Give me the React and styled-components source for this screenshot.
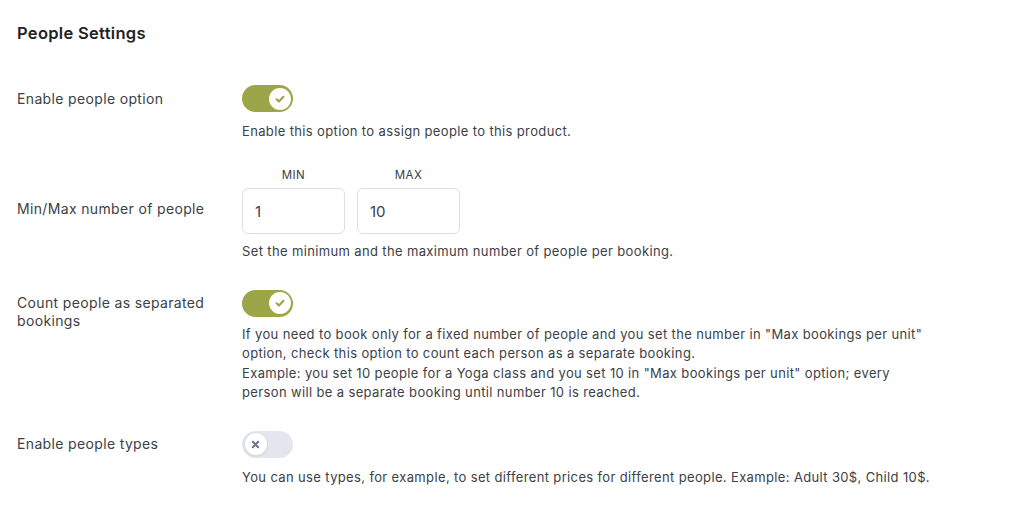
import React, { useState } from 'react';
import styled, { createGlobalStyle } from 'styled-components';

const GlobalStyle = createGlobalStyle`
    body {
        margin: 0;
        background: #fff;
        font-family: Inter, "Noto Sans", sans-serif;
        color: #3c4146;
    }
`;

const Page = styled.div`
    padding: 21px 17px;
`;

const Title = styled.h2`
    margin: 0 0 40px;
    font-size: 16.5px;
    line-height: 24px;
    font-weight: 600;
    letter-spacing: 0.3px;
    color: #1e2327;
`;

const Rows = styled.div`
    display: grid;
    row-gap: 28px;
`;

const Row = styled.div`
    display: grid;
    grid-template-columns: 200px 1fr;
    column-gap: 25px;
    align-items: start;
`;

const Label = styled.div`
    font-size: 14px;
    line-height: 18px;
    letter-spacing: 0.35px;
    padding-top: ${p => p.offset || 4.5}px;
    color: #3c4146;
`;

const Field = styled.div`
    display: flex;
    flex-direction: column;
    align-items: flex-start;
`;

const Desc = styled.p`
    margin: ${p => p.gap || 9.5}px 0 0;
    max-width: 690px;
    font-size: 13px;
    line-height: 19.5px;
    letter-spacing: 0.36px;
    color: #3c4146;
`;

const SwitchTrack = styled.button`
    width: 51px;
    height: 27px;
    border: 0;
    border-radius: 14px;
    padding: 2.5px;
    background: ${p => (p.on ? '#9ca547' : '#e3e6ec')};
    display: flex;
    justify-content: ${p => (p.on ? 'flex-end' : 'flex-start')};
    cursor: pointer;
`;

const Knob = styled.span`
    width: 22px;
    height: 22px;
    border-radius: 50%;
    background: #fff;
    box-shadow: ${p => (p.on ? 'none' : '0 0 0 1px #d8dce3, 0 1px 2px rgba(0,0,0,.12)')};
    display: flex;
    align-items: center;
    justify-content: center;
`;

const MinMax = styled.div`
    display: flex;
    gap: 12px;
`;

const NumberBox = styled.div`
    display: flex;
    flex-direction: column;
    align-items: center;
`;

const SmallHead = styled.span`
    font-size: 11.5px;
    line-height: 12px;
    letter-spacing: 0.4px;
    margin-bottom: 7px;
    color: #3c4146;
`;

const Input = styled.input`
    box-sizing: border-box;
    width: 103px;
    height: 46px;
    border: 1px solid #dcdfe5;
    border-radius: 6px;
    padding: 0 12px;
    font-family: inherit;
    font-size: 15px;
    color: #3c4146;
    outline: none;
`;

function Toggle({ initial }) {
    const [on, setOn] = useState(initial);
    return (
        <SwitchTrack on={on ? 1 : 0} onClick={() => setOn(!on)}>
            <Knob on={on ? 1 : 0}>
                {on ? (
                    <svg width="12" height="12" viewBox="0 0 12 12">
                        <path d="M2.6 6.3 L5 8.5 L9.4 3.8" fill="none" stroke="#9ca547" strokeWidth="2.2" strokeLinecap="round" strokeLinejoin="round" />
                    </svg>
                ) : (
                    <svg width="9" height="9" viewBox="0 0 10 10">
                        <path d="M2 2 L8 8 M8 2 L2 8" fill="none" stroke="#6c7480" strokeWidth="2.2" strokeLinecap="round" />
                    </svg>
                )}
            </Knob>
        </SwitchTrack>
    );
}

export default function App() {
    return (
        <Page>
            <GlobalStyle />
            <Title>People Settings</Title>
            <Rows>
                <Row>
                    <Label>Enable people option</Label>
                    <Field>
                        <Toggle initial={true} />
                        <Desc>Enable this option to assign people to this product.</Desc>
                    </Field>
                </Row>
                <Row>
                    <Label offset={31}>Min/Max number of people</Label>
                    <Field>
                        <MinMax>
                            <NumberBox>
                                <SmallHead>MIN</SmallHead>
                                <Input defaultValue="1" />
                            </NumberBox>
                            <NumberBox>
                                <SmallHead>MAX</SmallHead>
                                <Input defaultValue="10" />
                            </NumberBox>
                        </MinMax>
                        <Desc gap={8}>Set the minimum and the maximum number of people per booking.</Desc>
                    </Field>
                </Row>
                <Row>
                    <Label>Count people as separated bookings</Label>
                    <Field>
                        <Toggle initial={true} />
                        <Desc gap={8}>
                            If you need to book only for a fixed number of people and you set the number in "Max bookings per unit" option, check this option to count each person as a separate booking.
                            <br />
                            Example: you set 10 people for a Yoga class and you set 10 in "Max bookings per unit" option; every person will be a separate booking until number 10 is reached.
                        </Desc>
                    </Field>
                </Row>
                <Row>
                    <Label>Enable people types</Label>
                    <Field>
                        <Toggle initial={false} />
                        <Desc gap={10.5}>You can use types, for example, to set different prices for different people. Example: Adult 30$, Child 10$.</Desc>
                    </Field>
                </Row>
            </Rows>
        </Page>
    );
}
